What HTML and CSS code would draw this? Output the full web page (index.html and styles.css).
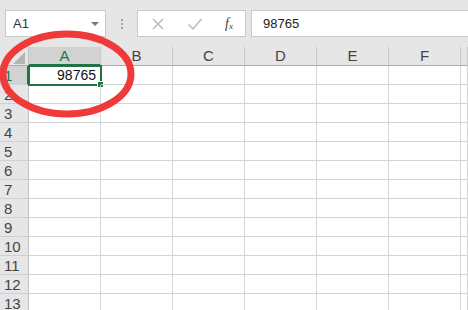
FILE: index.html
```html
<!DOCTYPE html>
<html lang="en">
<head>
  <meta charset="UTF-8">
  <title>Sheet</title>
  <link rel="stylesheet" href="styles.css">
</head>
<body>
  <div class="toolbar">
    <div class="name-box">
      <span>A1</span>
      <span class="caret"></span>
    </div>
    <div class="grip"><i></i><i></i><i></i></div>
    <div class="fx-box">
      <svg class="tool" width="14" height="14" viewBox="0 0 14 14"><path d="M2 2 L12 12 M12 2 L2 12" stroke="#b9b9b9" stroke-width="1.5" fill="none"/></svg>
      <svg class="tool" width="16" height="14" viewBox="0 0 16 14"><path d="M1.5 7.5 L6 12 L14.5 2" stroke="#b9b9b9" stroke-width="1.5" fill="none"/></svg>
      <span class="fx">f<sub>x</sub></span>
    </div>
    <div class="formula">98765</div>
  </div>

  <div class="sheet">
    <div class="row head">
      <div class="rh corner"></div>
      <div class="cell active">A</div>
      <div class="cell">B</div>
      <div class="cell">C</div>
      <div class="cell">D</div>
      <div class="cell">E</div>
      <div class="cell">F</div>
      <div class="cell"></div>
    </div>
    <div class="row">
      <div class="rh active">1</div>
      <div class="cell selected">98765<span class="handle"></span></div>
      <div class="cell"></div><div class="cell"></div><div class="cell"></div><div class="cell"></div><div class="cell"></div><div class="cell"></div>
    </div>
    <div class="row"><div class="rh">2</div><div class="cell"></div><div class="cell"></div><div class="cell"></div><div class="cell"></div><div class="cell"></div><div class="cell"></div><div class="cell"></div></div>
    <div class="row"><div class="rh">3</div><div class="cell"></div><div class="cell"></div><div class="cell"></div><div class="cell"></div><div class="cell"></div><div class="cell"></div><div class="cell"></div></div>
    <div class="row"><div class="rh">4</div><div class="cell"></div><div class="cell"></div><div class="cell"></div><div class="cell"></div><div class="cell"></div><div class="cell"></div><div class="cell"></div></div>
    <div class="row"><div class="rh">5</div><div class="cell"></div><div class="cell"></div><div class="cell"></div><div class="cell"></div><div class="cell"></div><div class="cell"></div><div class="cell"></div></div>
    <div class="row"><div class="rh">6</div><div class="cell"></div><div class="cell"></div><div class="cell"></div><div class="cell"></div><div class="cell"></div><div class="cell"></div><div class="cell"></div></div>
    <div class="row"><div class="rh">7</div><div class="cell"></div><div class="cell"></div><div class="cell"></div><div class="cell"></div><div class="cell"></div><div class="cell"></div><div class="cell"></div></div>
    <div class="row"><div class="rh">8</div><div class="cell"></div><div class="cell"></div><div class="cell"></div><div class="cell"></div><div class="cell"></div><div class="cell"></div><div class="cell"></div></div>
    <div class="row"><div class="rh">9</div><div class="cell"></div><div class="cell"></div><div class="cell"></div><div class="cell"></div><div class="cell"></div><div class="cell"></div><div class="cell"></div></div>
    <div class="row"><div class="rh">10</div><div class="cell"></div><div class="cell"></div><div class="cell"></div><div class="cell"></div><div class="cell"></div><div class="cell"></div><div class="cell"></div></div>
    <div class="row"><div class="rh">11</div><div class="cell"></div><div class="cell"></div><div class="cell"></div><div class="cell"></div><div class="cell"></div><div class="cell"></div><div class="cell"></div></div>
    <div class="row"><div class="rh">12</div><div class="cell"></div><div class="cell"></div><div class="cell"></div><div class="cell"></div><div class="cell"></div><div class="cell"></div><div class="cell"></div></div>
    <div class="row"><div class="rh">13</div><div class="cell"></div><div class="cell"></div><div class="cell"></div><div class="cell"></div><div class="cell"></div><div class="cell"></div><div class="cell"></div></div>
  </div>

  <!-- hand-drawn highlight around A1 -->
  <svg class="circle" width="140" height="96" viewBox="0 0 140 96">
    <ellipse cx="67" cy="46" rx="64" ry="40" fill="none" stroke="#f03a3a" stroke-width="7"/>
  </svg>
</body>
</html>
```
FILE: styles.css
```css
body {
  margin: 0;
  width: 468px;
  height: 310px;
  overflow: hidden;
  background: #fff;
  font-family: "Liberation Sans", Arial, sans-serif;
  color: #444;
}
.toolbar {
  display: flex;
  align-items: center;
  height: 47px;
  padding: 10px 0 10px 5px;
  box-sizing: border-box;
  background: #e6e6e6;
}
.name-box {
  display: flex;
  align-items: center;
  justify-content: space-between;
  width: 101px;
  height: 27px;
  padding: 0 6px 0 7px;
  box-sizing: border-box;
  background: #fff;
  border: 1px solid #c8c8c8;
  font-size: 13px;
  color: #333;
}
.caret {
  width: 0;
  height: 0;
  border-left: 4px solid transparent;
  border-right: 4px solid transparent;
  border-top: 4px solid #777;
}
.grip {
  display: flex;
  flex-direction: column;
  gap: 2px;
  margin: 0 14px 0 15px;
}
.grip i {
  width: 2px;
  height: 2px;
  background: #a8a8a8;
}
.fx-box {
  display: flex;
  align-items: center;
  width: 109px;
  height: 27px;
  padding-left: 13px;
  box-sizing: border-box;
  background: #fff;
  border: 1px solid #c8c8c8;
}
.tool {
  margin-right: 22px;
}
.fx {
  font-family: "Liberation Serif", serif;
  font-style: italic;
  font-size: 14px;
  color: #444;
}
.fx sub {
  font-size: 9px;
  vertical-align: -1px;
}
.formula {
  flex: 1;
  height: 27px;
  margin-left: 5px;
  padding-left: 11px;
  box-sizing: border-box;
  background: #fff;
  border: 1px solid #c8c8c8;
  border-right: none;
  font-size: 13px;
  line-height: 25px;
  color: #222;
}
.sheet {
  overflow: hidden;
}
.row {
  display: flex;
  height: 19px;
}
.rh {
  flex: none;
  width: 29px;
  box-sizing: border-box;
  padding-left: 4px;
  background: #e6e6e6;
  border-right: 1px solid #c4c4c4;
  border-bottom: 1px solid #d0d0d0;
  font-size: 15px;
  line-height: 19px;
  color: #444;
}
.rh.active {
  background: #d2d2d2;
  border-right: 2px solid #217346;
  color: #217346;
}
.cell {
  position: relative;
  flex: none;
  width: 72px;
  box-sizing: border-box;
  border-right: 1px solid #d4d4d4;
  border-bottom: 1px solid #d4d4d4;
  font-size: 14px;
  line-height: 18px;
}
.cell:last-child {
  flex: 1;
  width: auto;
}
.head {
  background: #e6e6e6;
}
.head .cell {
  text-align: center;
  border-right: 1px solid #c8c8c8;
  border-bottom: 1px solid #ababab;
  font-size: 15px;
  color: #444;
}
.head .rh {
  border-bottom: 1px solid #ababab;
}
.head .cell.active {
  background: #d2d2d2;
  border-bottom: 2px solid #217346;
  color: #217346;
}
.corner::after {
  content: "";
  display: block;
  width: 0;
  height: 0;
  margin: 5px 0 0 9px;
  border-left: 12px solid transparent;
  border-bottom: 12px solid #b4b4b4;
}
.cell.selected {
  text-align: right;
  padding-right: 4px;
  outline: 2px solid #217346;
  outline-offset: -1px;
  color: #111;
}
.handle {
  position: absolute;
  right: -4px;
  bottom: -4px;
  width: 5px;
  height: 5px;
  background: #217346;
  border: 1px solid #fff;
}
.circle {
  position: absolute;
  left: 0;
  top: 28px;
}
```
